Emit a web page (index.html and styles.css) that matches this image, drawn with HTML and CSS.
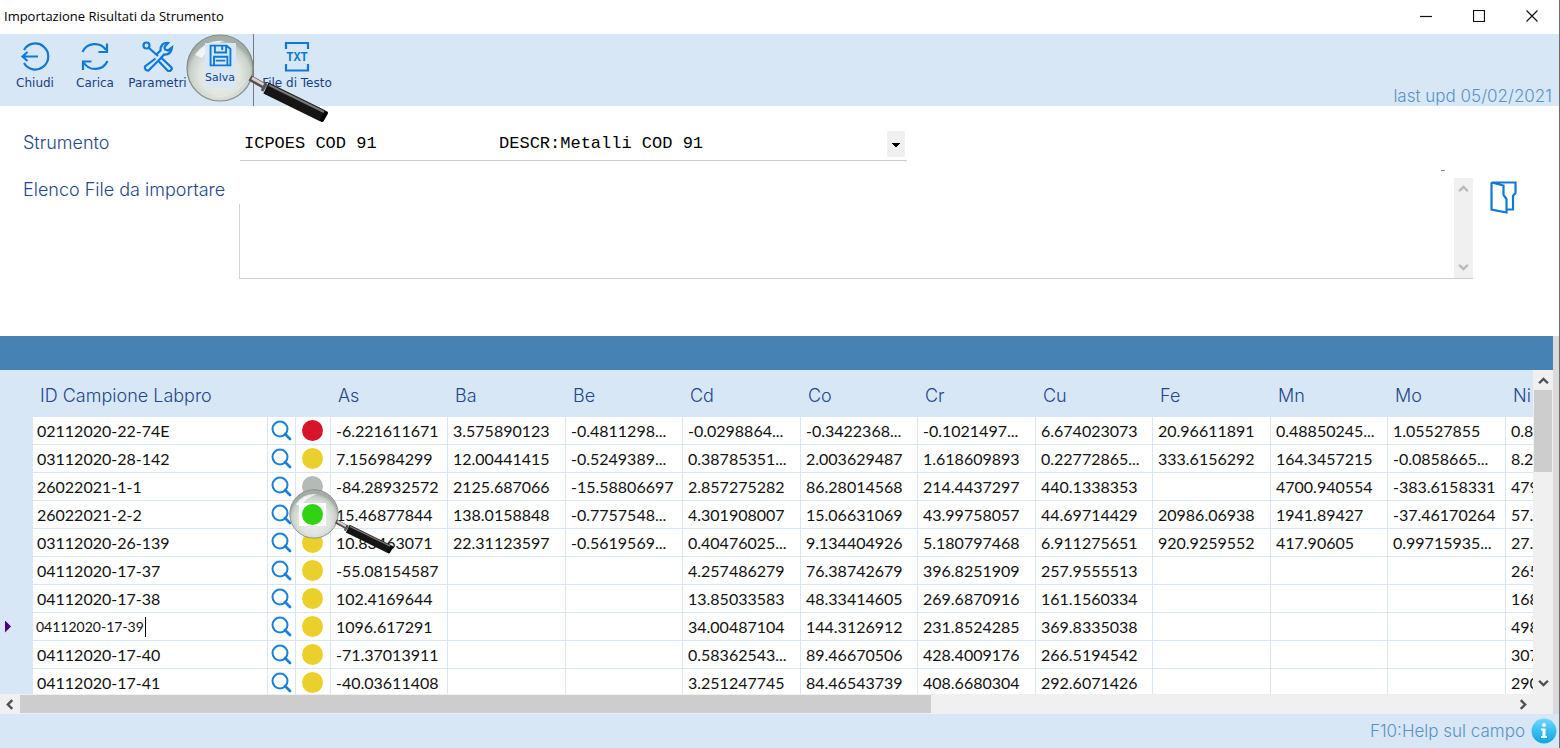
FILE: index.html
```html
<!DOCTYPE html>
<html lang="it">
<head>
  <meta charset="utf-8">
  <title>Importazione Risultati da Strumento</title>
  <meta name="viewport" content="width=device-width, initial-scale=1.0">
  <link rel="stylesheet" href="styles.css">
</head>
<body>
  <!-- shared icons -->
  <svg class="sprite" aria-hidden="true">
    <defs>
      <radialGradient id="glass" cx="50%" cy="60%" r="52%">
        <stop offset="0" stop-color="#eef1ec"/>
        <stop offset="0.6" stop-color="#e0e5df"/>
        <stop offset="0.88" stop-color="#c9d0ca"/>
        <stop offset="1" stop-color="#a3aca6"/>
      </radialGradient>
      <linearGradient id="info" x1="0" y1="0" x2="0" y2="1">
        <stop offset="0" stop-color="#6fd6fb"/>
        <stop offset="1" stop-color="#0aa5e2"/>
      </linearGradient>
      <symbol id="lens" viewBox="0 0 143 90">
        <circle cx="34" cy="34" r="33" fill="url(#glass)" stroke="#858b87" stroke-width="1.2"/>
        <path d="M9 21 Q20 5 38 7 Q22 12 16 24 Z" fill="#fff" opacity="0.75"/>
        <path d="M22 62 Q46 68 61 43 Q52 62 30 63 Z" fill="#fff" opacity="0.8"/>
        <path d="M64 44 L80 53" stroke="#55504f" stroke-width="6"/>
        <path d="M66 44 L80 52" stroke="#d8cfcd" stroke-width="3"/>
        <path d="M80 54 L137 82" stroke="#151515" stroke-width="12"/>
        <path d="M83 51 L138 78" stroke="#777" stroke-width="2"/>
        <path d="M80 49 L76 57" stroke="#555" stroke-width="3"/>
        <path d="M136 86 L140 79" stroke="#000" stroke-width="4" stroke-linecap="round"/>
      </symbol>
      <symbol id="search" viewBox="0 0 22 22">
        <circle cx="9" cy="9" r="7.5" fill="none" stroke="#1a80d9" stroke-width="2"/>
        <path d="M14 14 L19 19" fill="none" stroke="#1a80d9" stroke-width="2.8" stroke-linecap="round"/>
      </symbol>
      <symbol id="up" viewBox="0 0 10 8">
        <path d="M1 6.5 L5 2.5 L9 6.5" fill="none" stroke="currentColor" stroke-width="2.2"/>
      </symbol>
    </defs>
  </svg>

  <header class="titlebar">
    <h1>Importazione Risultati da Strumento</h1>
    <div class="window-buttons">
      <button type="button" aria-label="Riduci"><svg width="12" height="12" viewBox="0 0 12 12"><path d="M0 6.5 H12"/></svg></button>
      <button type="button" aria-label="Ingrandisci"><svg width="12" height="12" viewBox="0 0 12 12"><path d="M0.5 0.5 H11.5 V11.5 H0.5 Z"/></svg></button>
      <button type="button" aria-label="Chiudi finestra"><svg width="12" height="12" viewBox="0 0 12 12"><path d="M0.5 0.5 L11.5 11.5 M11.5 0.5 L0.5 11.5"/></svg></button>
    </div>
  </header>

  <nav class="toolbar">
    <button type="button" class="tool">
      <svg width="32" height="32" viewBox="0 0 32 32"><path d="M5 9 A13 13 0 1 1 5 22 M19 15.500 H4 M8.500 11 L3.500 15.500 L8.500 20"/></svg>
      <span>Chiudi</span>
    </button>
    <button type="button" class="tool">
      <svg width="32" height="32" viewBox="0 0 32 32"><path d="M3.500 11 A13.500 13.500 0 0 1 27 9 M28 2.500 V11 H19.500 M28.500 20 A13.500 13.500 0 0 1 5 22 M4 29 V20.500 H12.500"/></svg>
      <span>Carica</span>
    </button>
    <button type="button" class="tool wide">
      <svg width="34" height="32" viewBox="0 0 32 32"><circle cx="4.500" cy="4.500" r="3"/><path d="M7 7 L16 15 M13.500 17.500 L3 25.500 A3 3 0 0 0 6.500 29.500 L18.500 17.500 L22 13.500 Q29 14 30 6.500 L26 9.500 L23 8.500 L22.500 6 L26 2 Q18.500 1.500 18.500 9.500 L14 14 M19 16.500 L29.500 26.500 Q30.500 28.500 28 30 H26 L17 20.500"/></svg>
      <span>Parametri</span>
    </button>
    <button type="button" class="tool save">
      <svg class="lens" width="143" height="90"><use href="#lens"/></svg>
      <span class="plate">
        <svg width="31" height="29" viewBox="0 0 31 29"><path d="M4 3 H22.500 L27 7 V26 H4 Z M9 3 V11 H22 V3 M17.500 4 V8 M8 26 V16 H23.500 V26 M10 20.500 H21"/></svg>
        <span>Salva</span>
      </span>
    </button>
    <button type="button" class="tool file">
      <svg width="32" height="32" viewBox="0 0 32 32"><path d="M5 8 V2 H27 V8 M5 23 V29.500 H27 V23"/><text x="16" y="20">TXT</text></svg>
      <span>File di Testo</span>
    </button>
    <p class="updated">last upd 05/02/2021</p>
  </nav>

  <form class="filters">
    <label for="strumento">Strumento</label>
    <select id="strumento" class="instrument">
      <option>ICPOES COD 91&nbsp;&nbsp;&nbsp;&nbsp;&nbsp;&nbsp;&nbsp;&nbsp;&nbsp;&nbsp;&nbsp;&nbsp;DESCR:Metalli COD 91</option>
    </select>

    <label for="elenco">Elenco File da importare</label>
    <div class="file-row">
      <div class="file-list">
        <textarea id="elenco"></textarea>
        <div class="list-scroll">
          <svg width="11" height="9"><use href="#up"/></svg>
          <svg class="down" width="11" height="9"><use href="#up"/></svg>
        </div>
      </div>
      <button type="button" class="browse" aria-label="Sfoglia">
        <svg width="27" height="33" viewBox="0 0 27 33"><path d="M1.500 1.500 H25.500 V12 L23 15 V28.500 H16.500 M1.500 1.500 V28.500 L16.500 31.500 V18 L13.500 14 V4.500 L1.500 1.500"/></svg>
      </button>
    </div>
  </form>

  <main class="results">
    <div class="band"></div>
    <div class="grid-area">
      <div class="grid-view">
        <table>
          <colgroup>
            <col class="marker"><col class="id"><col class="find"><col class="status">
            <col class="a"><col class="b"><col class="a"><col class="b"><col class="a"><col class="b">
            <col class="a"><col class="b"><col class="a"><col class="b"><col class="a">
          </colgroup>
          <thead>
            <tr><th></th><th>ID Campione Labpro</th><th></th><th></th><th>As</th><th>Ba</th><th>Be</th><th>Cd</th><th>Co</th><th>Cr</th><th>Cu</th><th>Fe</th><th>Mn</th><th>Mo</th><th>Ni</th></tr>
          </thead>
          <tbody>
            <tr><td></td><td>02112020-22-74E</td><td><button type="button" aria-label="Cerca"><svg><use href="#search"/></svg></button></td><td><i class="dot red"></i></td>
              <td>-6.221611671</td><td>3.575890123</td><td>-0.4811298...</td><td>-0.0298864...</td><td>-0.3422368...</td><td>-0.1021497...</td><td>6.674023073</td><td>20.96611891</td><td>0.48850245...</td><td>1.05527855</td><td>0.8</td></tr>
            <tr><td></td><td>03112020-28-142</td><td><button type="button" aria-label="Cerca"><svg><use href="#search"/></svg></button></td><td><i class="dot"></i></td>
              <td>7.156984299</td><td>12.00441415</td><td>-0.5249389...</td><td>0.38785351...</td><td>2.003629487</td><td>1.618609893</td><td>0.22772865...</td><td>333.6156292</td><td>164.3457215</td><td>-0.0858665...</td><td>8.2</td></tr>
            <tr><td></td><td>26022021-1-1</td><td><button type="button" aria-label="Cerca"><svg><use href="#search"/></svg></button></td><td><i class="dot grey"></i></td>
              <td>-84.28932572</td><td>2125.687066</td><td>-15.58806697</td><td>2.857275282</td><td>86.28014568</td><td>214.4437297</td><td>440.1338353</td><td></td><td>4700.940554</td><td>-383.6158331</td><td>479</td></tr>
            <tr><td></td><td>26022021-2-2</td><td><button type="button" aria-label="Cerca"><svg><use href="#search"/></svg></button></td><td class="focus"><svg class="lens"><use href="#lens"/></svg><span class="plate"><i class="dot green"></i></span></td>
              <td>15.46877844</td><td>138.0158848</td><td>-0.7757548...</td><td>4.301908007</td><td>15.06631069</td><td>43.99758057</td><td>44.69714429</td><td>20986.06938</td><td>1941.89427</td><td>-37.46170264</td><td>57.</td></tr>
            <tr><td></td><td>03112020-26-139</td><td><button type="button" aria-label="Cerca"><svg><use href="#search"/></svg></button></td><td><i class="dot"></i></td>
              <td>10.83463071</td><td>22.31123597</td><td>-0.5619569...</td><td>0.40476025...</td><td>9.134404926</td><td>5.180797468</td><td>6.911275651</td><td>920.9259552</td><td>417.90605</td><td>0.99715935...</td><td>27.</td></tr>
            <tr><td></td><td>04112020-17-37</td><td><button type="button" aria-label="Cerca"><svg><use href="#search"/></svg></button></td><td><i class="dot"></i></td>
              <td>-55.08154587</td><td></td><td></td><td>4.257486279</td><td>76.38742679</td><td>396.8251909</td><td>257.9555513</td><td></td><td></td><td></td><td>265</td></tr>
            <tr><td></td><td>04112020-17-38</td><td><button type="button" aria-label="Cerca"><svg><use href="#search"/></svg></button></td><td><i class="dot"></i></td>
              <td>102.4169644</td><td></td><td></td><td>13.85033583</td><td>48.33414605</td><td>269.6870916</td><td>161.1560334</td><td></td><td></td><td></td><td>168</td></tr>
            <tr><td><i class="current"></i></td><td class="editing"><input type="text" aria-label="ID Campione Labpro" value="04112020-17-39"></td><td><button type="button" aria-label="Cerca"><svg><use href="#search"/></svg></button></td><td><i class="dot"></i></td>
              <td>1096.617291</td><td></td><td></td><td>34.00487104</td><td>144.3126912</td><td>231.8524285</td><td>369.8335038</td><td></td><td></td><td></td><td>498</td></tr>
            <tr><td></td><td>04112020-17-40</td><td><button type="button" aria-label="Cerca"><svg><use href="#search"/></svg></button></td><td><i class="dot"></i></td>
              <td>-71.37013911</td><td></td><td></td><td>0.58362543...</td><td>89.46670506</td><td>428.4009176</td><td>266.5194542</td><td></td><td></td><td></td><td>307</td></tr>
            <tr><td></td><td>04112020-17-41</td><td><button type="button" aria-label="Cerca"><svg><use href="#search"/></svg></button></td><td><i class="dot"></i></td>
              <td>-40.03611408</td><td></td><td></td><td>3.251247745</td><td>84.46543739</td><td>408.6680304</td><td>292.6071426</td><td></td><td></td><td></td><td>290</td></tr>
          </tbody>
        </table>
      </div>
      <div class="vscroll">
        <svg width="11" height="9"><use href="#up"/></svg>
        <div class="thumb"></div>
        <svg class="down" width="11" height="9"><use href="#up"/></svg>
      </div>
    </div>
    <div class="hscroll">
      <svg class="left" width="11" height="9"><use href="#up"/></svg>
      <div class="track"><div class="thumb"></div></div>
      <svg class="right" width="11" height="9"><use href="#up"/></svg>
    </div>
  </main>

  <footer class="statusbar">
    <span>F10:Help sul campo</span>
    <svg width="26" height="26" viewBox="0 0 26 26"><circle cx="13" cy="13" r="12.500" fill="url(#info)"/><circle cx="13" cy="7" r="2" fill="#fff"/><path d="M10 10.500 H14.500 V18 H16 V20 H10 V18 H11.500 V12.500 H10 Z" fill="#fff"/></svg>
  </footer>
</body>
</html>
```

FILE: styles.css
```css
* {
  box-sizing: border-box;
}

body {
  margin: 0;
  height: 100vh;
  display: flex;
  flex-direction: column;
  overflow: hidden;
  background: #fff;
  border-right: 1px solid #6b6b6b;
  font-family: Inter, "Liberation Sans", sans-serif;
  font-size: 17px;
  font-weight: 300;
  color: #24478c;
}

button {
  padding: 0;
  border: 0;
  background: none;
  cursor: pointer;
}

svg {
  display: block;
}

.sprite {
  position: absolute;
  width: 0;
  height: 0;
}

/* title bar */
.titlebar {
  height: 34px;
  flex: none;
  display: flex;
  align-items: center;
  justify-content: space-between;
  padding: 0 21px 2px 4px;
}

.titlebar h1 {
  margin: 0;
  font: 400 13px "Open Sans", sans-serif;
  color: #000;
}

.window-buttons {
  display: flex;
  gap: 41px;
}

.window-buttons path {
  fill: none;
  stroke: #111;
  stroke-width: 1.2;
}

/* toolbar */
.toolbar {
  height: 72px;
  flex: none;
  display: flex;
  padding: 0 7px 0 5px;
  background: #d7e7f5;
}

.tool {
  width: 60px;
  padding-top: 7px;
  display: flex;
  flex-direction: column;
  align-items: center;
  font: 12px "DejaVu Sans", sans-serif;
  line-height: 20px;
  white-space: nowrap;
  color: #173f86;
}

.tool.wide {
  width: 65px;
}

.tool path,
.tool circle,
.browse path {
  fill: none;
  stroke: #0f7ad6;
  stroke-width: 2.2;
}

.tool text {
  font: bold 12px "Liberation Mono", monospace;
  text-anchor: middle;
  fill: #0f7ad6;
}

.tool.save {
  position: relative;
  z-index: 1;
  padding-top: 9px;
}

/* restore the glass colours inside the toolbar */
.tool .lens circle,
.tool .lens path {
  fill: revert-layer;
  stroke: revert-layer;
  stroke-width: revert-layer;
}

.save .lens {
  position: absolute;
  top: 0;
  left: -4px;
  z-index: -1;
}

.save .plate {
  width: 31px;
  height: 45px;
  display: flex;
  flex-direction: column;
  align-items: center;
  background: #d7e7f5;
  font-size: 11px;
  line-height: 20px;
}

.tool.file {
  width: 87px;
  margin-left: 3px;
  border-left: 1px solid #777;
}

.updated {
  margin: auto 0 0 auto;
  line-height: 20px;
  color: #5b92c5;
}

/* filters */
.filters {
  flex: none;
  height: 230px;
  display: grid;
  grid-template-columns: 216px 1fr;
  grid-template-rows: 30px 101px;
  row-gap: 17px;
  padding: 25px 42px 0 23px;
}

.filters label {
  font-size: 18px;
  line-height: 24px;
}

.instrument {
  width: 667px;
  max-width: 100%;
  height: 30px;
  margin-left: 1px;
  padding: 0 4px 4px;
  appearance: none;
  border: 0;
  border-bottom: 1px solid #ccc;
  border-radius: 0;
  background:
    conic-gradient(from -45deg at 50% 100%, #000 90deg, transparent 0) right 7px top 12px / 8px 4px no-repeat,
    linear-gradient(#f0f0f0, #f0f0f0) right 2px top 0 / 18px 26px no-repeat;
  font: 17px "Liberation Mono", monospace;
  color: #000;
}

.file-row {
  display: flex;
  align-items: flex-start;
  gap: 17px;
}

.file-list {
  position: relative;
  flex: 1;
  height: 101px;
  display: flex;
  border-bottom: 1px solid #ccc;
  background: linear-gradient(#d4d4d4, #d4d4d4) left bottom / 1px 74px no-repeat;
}

.file-list::before {
  content: "";
  position: absolute;
  top: -8px;
  right: 28px;
  width: 4px;
  height: 1px;
  background: #888;
}

.file-list textarea {
  flex: 1;
  border: 0;
  resize: none;
  background: none;
  font: 17px "Liberation Mono", monospace;
}

.list-scroll {
  width: 19px;
  display: flex;
  flex-direction: column;
  align-items: center;
  justify-content: space-between;
  padding: 6px 0;
  background: #f0f0f0;
  color: #bababa;
}

.down {
  transform: rotate(180deg);
}

.left {
  transform: rotate(-90deg);
}

.right {
  transform: rotate(90deg);
}

.browse {
  padding-top: 3px;
}

/* results */
.results {
  flex: 1;
  min-height: 0;
  display: flex;
  flex-direction: column;
  border-right: 6px solid #dadada;
}

.band {
  height: 34px;
  flex: none;
  background: #4682b4;
}

.grid-area {
  flex: 1;
  min-height: 0;
  display: flex;
}

.grid-view {
  flex: 1;
  min-width: 0;
  overflow: hidden;
  background: #d7e7f5;
}

table {
  width: 1623px;
  table-layout: fixed;
  border-collapse: separate;
  border-spacing: 0;
}

.marker { width: 33px; }
.id { width: 235px; }
.find { width: 28px; }
.status { width: 35px; }
.a { width: 117px; }
.b { width: 118px; }

th {
  height: 47px;
  padding: 3px 0 0 7px;
  text-align: left;
  font-size: 18px;
  font-weight: 300;
}

td {
  height: 28px;
  padding: 0 0 0 5px;
  border-right: 1px solid #d7e7f5;
  border-bottom: 1px solid #d7e7f5;
  background: #fff;
  font-family: Lato, sans-serif;
  font-size: 16px;
  font-weight: 400;
  line-height: 20px;
  white-space: nowrap;
  color: #111;
}

td:first-child {
  background: #d7e7f5;
}

td button {
  display: block;
}

td button svg {
  width: 22px;
  height: 22px;
}

td:nth-child(2) {
  padding-left: 4px;
}

td:nth-child(3) {
  padding-left: 3px;
}

td:nth-child(4) {
  padding-left: 6px;
}

.dot {
  display: block;
  width: 21px;
  height: 21px;
  border-radius: 50%;
  background: #ebd02b;
}

.dot.red { background: #d8142a; }
.dot.grey { background: #b4bab5; }
.dot.green { background: #2fd312; }

.focus {
  position: relative;
  z-index: 1;
  background: none;
}

.focus .lens {
  position: absolute;
  top: -12px;
  left: -7px;
  z-index: -1;
  width: 105px;
  height: 66px;
}

.focus .plate {
  display: block;
  width: 27px;
  margin-left: -3px;
  padding: 1px 3px;
  background: #fff;
}

.current {
  display: block;
  width: 6px;
  height: 12px;
  background: #4b0082;
  clip-path: polygon(0 0, 100% 50%, 0 100%);
}

td.editing {
  padding-left: 3px;
}

.editing input {
  display: block;
  width: 110px;
  height: 20px;
  padding: 0;
  border: 0;
  border-right: 1px solid #000;
  border-radius: 0;
  font: 14px Lato, sans-serif;
  color: #111;
}

/* scroll bars */
.vscroll {
  width: 20px;
  display: flex;
  flex-direction: column;
  align-items: center;
  padding: 6px 0;
  background: #f0f0f0;
  color: #505050;
}

.vscroll .thumb {
  width: 18px;
  height: 82px;
  margin-top: 5px;
  background: #cdcdcd;
}

.vscroll .down {
  margin-top: auto;
}

.hscroll {
  height: 20px;
  flex: none;
  display: flex;
  align-items: center;
  padding: 0 24px 0 4px;
  background: #f0f0f0;
  color: #505050;
}

.hscroll .track {
  flex: 1;
  margin: 0 5px;
}

.hscroll .thumb {
  width: 61%;
  height: 18px;
  background: #cdcdcd;
}

/* status bar */
.statusbar {
  height: 34px;
  flex: none;
  display: flex;
  align-items: center;
  justify-content: flex-end;
  gap: 6px;
  padding-right: 2px;
  background: #d7e7f5;
  color: #5b92c5;
}
```
